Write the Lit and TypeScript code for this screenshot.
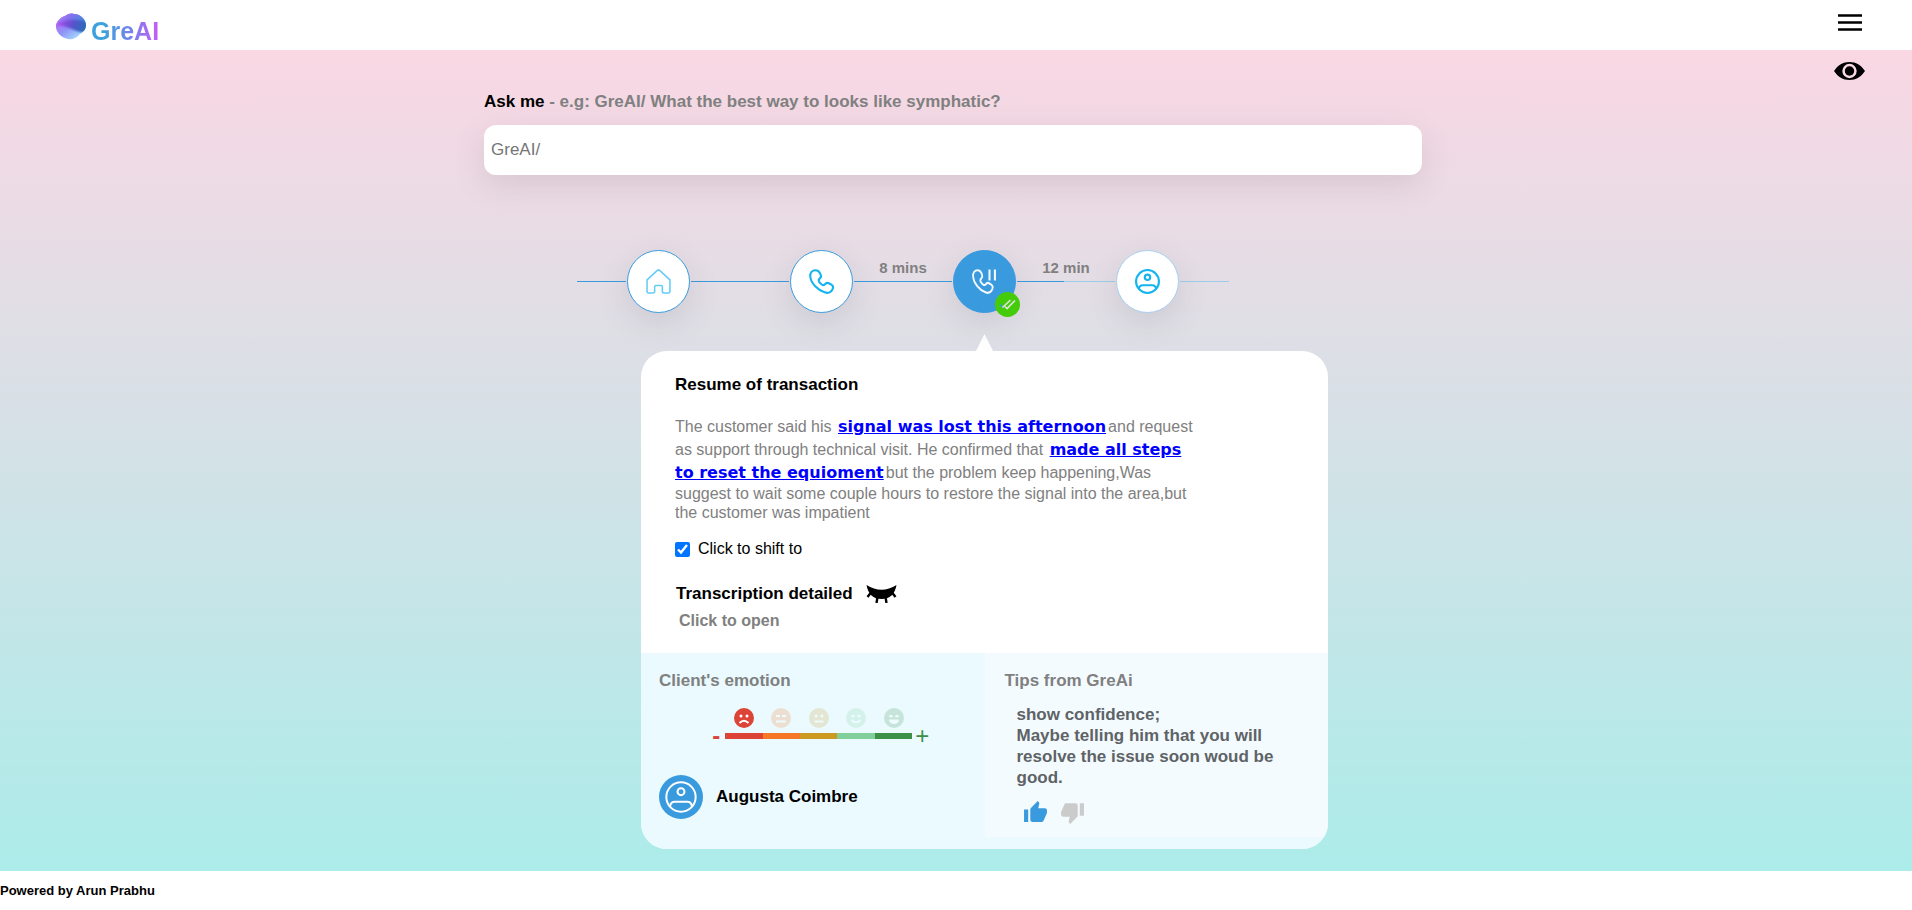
import { LitElement, html, css, svg, nothing } from "lit";
import { customElement, state } from "lit/decorators.js";
import { classMap } from "lit/directives/class-map.js";

const profileGlyph = svg`
  <circle cx="12" cy="12" r="11"></circle>
  <circle cx="12" cy="8" r="2.6"></circle>
  <path d="M3.800 19.200C4 16.800 5.200 15.600 7.400 15.600h9.200c2.200 0 3.400 1.200 3.600 3.600"></path>`;

const handset = svg`<path d="M1.200 7C1 3.400 3 1.200 6.200 1.200c2.200 0 3.200.8 4.200 2.600l.8 1.600c.7 1.500.4 2.600-.8 3.600-1.400 1.100-1.500 1.800-.7 3.200.9 1.500 1.700 2.300 3.100 3 1.200.6 1.900.3 2.900-.8 1-1.100 2.400-1.300 3.800-.5l2 1.200c1.800 1.100 2 2.600 1.200 4.200-1.500 3-4.400 4.200-7.700 3.100C8.200 20.200 1.700 13.600 1.200 7z"></path>`;

const homeGlyph = svg`<path d="M1 10.400 10.900 1.300a1.700 1.700 0 0 1 2.200 0L23 10.400v11.200A1.500 1.500 0 0 1 21.500 23h-4.300a1.500 1.500 0 0 1-1.500-1.500v-4.700a1 1 0 0 0-1-1H9.300a1 1 0 0 0-1 1v4.700A1.500 1.500 0 0 1 6.800 23H2.500A1.500 1.500 0 0 1 1 21.600z"></path>`;

const pausedCall = svg`
  <g transform="scale(.86 1)">${handset}</g>
  <path d="M16.800 .5v10.500M22 .5v10.500"></path>`;

const eyes = [
  svg`<circle cx="7" cy="8" r="1.500"></circle><circle cx="13" cy="8" r="1.500"></circle>`,
  svg`<path d="M5 8h4M11 8h4"></path>`,
  svg`<path d="M5.500 9q1.500-2.600 3 0M11.500 9q1.500-2.600 3 0"></path>`,
];

const moods = [
  { name: "Angry", color: "sad", face: svg`${eyes[0]}<path d="M5.500 15q4.500-4.500 9 0"></path>` },
  { name: "Annoyed", color: "low", face: svg`${eyes[1]}<path d="M5 13.500h10"></path>` },
  { name: "Neutral", color: "mid", face: svg`${eyes[0]}<path d="M5.500 13.500h9"></path>` },
  { name: "Pleased", color: "good", face: svg`${eyes[0]}<path d="M5.500 12q4.500 4.500 9 0"></path>` },
  { name: "Happy", color: "great", face: svg`${eyes[2]}<path class="solid" d="M5 11.500h10c0 2.600-2 4.500-5 4.500s-5-1.900-5-4.500z"></path>` },
];

const thumb =
  "M1 21h4V9H1v12zm22-11c0-1.100-.9-2-2-2h-6.310l.950-4.570.030-.320c0-.410-.170-.790-.440-1.060L14.170 1 7.590 7.590C7.220 7.950 7 8.450 7 9v10c0 1.100.9 2 2 2h9c.830 0 1.540-.5 1.840-1.220l3.020-7.050c.090-.230.140-.470.140-.730v-2z";

@customElement("app-root")
export class AppRoot extends LitElement {
  @state() private mood = 0;
  @state() private step = 2;
  @state() private vote: "up" | "down" = "up";

  static styles = css`
    :host {
      display: flex;
      flex-direction: column;
      min-height: 100vh;
      font-family: "Liberation Sans", Arial, sans-serif;
      font-size: 16px;
      color: #000;
      background: linear-gradient(to top, #a8edea, #fed6e3);
    }
    * { box-sizing: border-box; }
    h2, h3, p, ol, ul { margin: 0; padding: 0; font-size: inherit; list-style: none; }
    button { border: 0; padding: 0; background: none; font: inherit; color: inherit; cursor: pointer; }
    svg { display: block; }

    header {
      display: flex;
      align-items: center;
      justify-content: space-between;
      height: 50px;
      padding: 0 50px 0 55px;
      background: #fff;
    }
    .brand {
      display: flex;
      align-items: center;
      gap: 4px;
      padding-top: 8px;
      text-decoration: none;
      font-weight: bold;
      font-size: 25px;
      line-height: 28px;
    }
    .brand svg { align-self: flex-start; }
    .wordmark {
      padding-top: 4px;
      color: transparent;
      background: linear-gradient(90deg, #3fa0dd 20%, #6f86ea 55%, #c85cf5);
      background-clip: text;
      -webkit-background-clip: text;
    }
    .menu { margin-bottom: 5px; }

    main { flex: 1; padding: 11px 6px 20px 0; }
    .tools { display: flex; justify-content: flex-end; height: 20px; align-items: center; padding-right: 41px; }
    .content { max-width: 938px; margin: 11px auto 0; }

    .ask label {
      display: block;
      margin-bottom: 13px;
      font-size: 17px;
      line-height: 20px;
      font-weight: bold;
    }
    .hint { color: #808080; }
    .ask input {
      display: block;
      width: 100%;
      height: 50px;
      padding: 0 7px;
      border: 0;
      border-radius: 12px;
      outline: 0;
      background: #fff;
      font: inherit;
      font-size: 17px;
      box-shadow: 0 10px 30px rgba(100, 100, 111, 0.16);
    }
    .ask input::placeholder { color: #757575; }

    .steps { display: flex; max-width: 652px; margin: 75px 0 0 93px; }
    .span {
      flex: 2;
      display: grid;
      grid-template-rows: 31px 1px 31px;
      margin: 0 1px;
      text-align: center;
      font-size: 15px;
      line-height: 18px;
      font-weight: bold;
      color: #808080;
    }
    .span.edge { flex: 1; }
    .span.first { margin-left: 0; }
    .span.last { margin-right: 0; }
    .time { padding-top: 9px; }
    .line { grid-row: 2; background: #3a9ade; }
    .partial .line { background: linear-gradient(90deg, #3a9ade 48%, #9ccbe8 48%); }
    .last .line { background: #9ccbe8; }
    .stop {
      position: relative;
      flex: none;
      display: grid;
      place-items: center;
      width: 63px;
      height: 63px;
      border: 1px solid #3a9ade;
      border-radius: 50%;
      background: #fff;
      box-shadow: 0 10px 30px rgba(100, 100, 111, 0.16);
    }
    .stop svg, .avatar svg { fill: none; stroke: #14b4f0; stroke-width: 2; overflow: visible; }
    .stop .thin { stroke: #62cdf7; stroke-width: 1.500; }
    .stop.pending { border-color: #a6cff0; }
    .stop.current { background: #3a9ade; }
    .stop.current svg { stroke: #f2f8fd; }
    .stop .badge {
      position: absolute;
      right: -5px;
      bottom: -5px;
      display: grid;
      place-items: center;
      width: 25px;
      height: 25px;
      border-radius: 50%;
      background: #44cc0a;
    }
    .stop .badge svg { stroke-width: 1.600; }

    .panel { max-width: 687px; margin: 21px 0 0 157px; }
    .pointer { display: block; margin: 0 auto; }
    .card { border-radius: 26px; background: #fff; overflow: hidden; }
    .summary { padding: 24px 34px 22px; }
    .summary h2, .client-name { font-size: 17px; line-height: 20px; }
    .summary p { max-width: 526px; margin-top: 20px; line-height: 19px; color: #808080; }
    .summary p a {
      margin: 0 2px;
      font-family: "DejaVu Sans", Verdana, sans-serif;
      font-weight: bold;
      line-height: 23px;
      color: #00f;
    }
    .shift { display: flex; align-items: center; gap: 8px; margin-top: 18px; line-height: 18px; }
    .shift input { width: 15px; height: 15px; margin: 0; accent-color: #0075ff; }
    .transcript { display: flex; align-items: center; gap: 13px; margin-top: 26px; padding-left: 1px; }
    .lashes { stroke: #000; stroke-width: 2.400; fill: none; }
    .open { display: block; margin-top: 7px; padding-left: 4px; font-weight: bold; line-height: 20px; color: #808080; }

    .insights { display: grid; grid-template-columns: 1fr 1fr; padding-bottom: 12px; background: #eafaff; }
    .insights h3 { font-size: 17px; line-height: 20px; color: #808080; }
    .emotion { padding: 18px 18px 0; }
    .scale { display: flex; align-items: flex-end; justify-content: center; gap: 3px; margin: 17px 0 0 12px; }
    .sign { width: 12px; height: 20px; margin-bottom: -7px; font-size: 24px; line-height: 20px; text-align: center; }
    .minus { color: #db4437; font-weight: bold; }
    .plus { color: #3c9048; }
    .moods { display: flex; width: 187px; }
    .mood { flex: 1; display: grid; justify-items: center; gap: 5px; }
    .mood::after { content: ""; width: 100%; height: 6px; background: var(--tone); }
    .mood svg { fill: #fff; stroke: #fff; stroke-width: 0; }
    .mood path { fill: none; stroke-width: 2; }
    .mood .solid { fill: #fff; stroke-width: 0; }
    .mood .disc { fill: var(--tone); }
    .mood button { opacity: 0.2; }
    .mood button.active { opacity: 1; }
    .sad { --tone: #db4437; }
    .low { --tone: #f47826; }
    .mid { --tone: #cc9922; }
    .good { --tone: #82cf9c; }
    .great { --tone: #3c9048; }
    .client { display: flex; align-items: center; gap: 13px; margin-top: 36px; }
    .avatar { display: grid; place-items: center; width: 44px; height: 44px; border-radius: 50%; background: #3a9ade; }
    .avatar svg { stroke: #fff; stroke-width: 1.500; }
    .client-name { font-weight: bold; }

    .tips { padding: 18px 20px 12px; background: #f4fbff; }
    .advice { margin: 13px 0 0 12px; max-width: 280px; font-size: 17px; line-height: 21px; font-weight: bold; color: #5e6366; }
    .votes { display: flex; gap: 12px; margin: 12px 0 0 18px; }
    .votes svg { fill: #cbcbcb; }
    .votes .on svg { fill: #3a9ade; }

    footer { padding: 12px 0; background: #fff; font-size: 13px; line-height: 15px; font-weight: bold; }
  `;

  private stop(index: number, label: string, glyph: unknown, extra = "", thin = false) {
    return html`<button
      class=${classMap({ stop: true, current: this.step === index, pending: extra === "pending" })}
      aria-label=${label}
      @click=${() => (this.step = index)}
    >
      <svg class=${thin ? "thin" : ""} width="25" height="25" viewBox="0 0 24 24">${glyph}</svg>
      ${extra === "done"
        ? html`<span class="badge"><svg width="17" height="13" viewBox="0 0 17 13">
            <path d="M1 6.500 4 9.500" stroke="#3a9ade"></path>
            <path d="M3.500 9.500 11.500 2M6 8.500 8 10.500 16 2.500" stroke="#dfe3df"></path>
          </svg></span>`
        : nothing}
    </button>`;
  }

  render() {
    return html`
      <header>
        <a class="brand" href="#">
          <svg width="32" height="28" viewBox="0 0 32 28" aria-hidden="true">
            <defs>
              <linearGradient id="base" x1="0" y1="0.200" x2="0.700" y2="1">
                <stop offset="0" stop-color="#c65cf8"></stop>
                <stop offset="0.500" stop-color="#8f93f8"></stop>
                <stop offset="1" stop-color="#a8e6fd"></stop>
              </linearGradient>
              <linearGradient id="wave" x1="0" y1="0.400" x2="1" y2="0.600">
                <stop offset="0" stop-color="#b84df0"></stop>
                <stop offset="0.500" stop-color="#5a52cc"></stop>
                <stop offset="1" stop-color="#2170b4"></stop>
              </linearGradient>
              <linearGradient id="crown" x1="0" y1="0" x2="1" y2="0.500">
                <stop offset="0" stop-color="#d58cf8"></stop>
                <stop offset="0.500" stop-color="#8570f0"></stop>
                <stop offset="1" stop-color="#3590d8"></stop>
              </linearGradient>
              <filter id="soft"><feGaussianBlur stdDeviation="1"></feGaussianBlur></filter>
              <clipPath id="blob"><path d="M1 12C2 8 6 4 10 3c3-2 5-3 9-2 7 0 12 6 12 11 0 5-3 7-6 9-3 4-8 6-12 5C6 25 0 18 1 12z"></path></clipPath>
            </defs>
            <g clip-path="url(#blob)">
              <path fill="url(#base)" d="M0 0h32v28H0z"></path>
              <g filter="url(#soft)">
                <path fill="url(#crown)" d="M0 10V-3h34v18C24 11 14 7 0 10z"></path>
                <path fill="url(#wave)" d="M0 12C8 7 18 5 33 9v10c-10 3-16-6-33-7z"></path>
              </g>
            </g>
          </svg>
          <span class="wordmark">GreAI</span>
        </a>
        <button class="menu" aria-label="Menu">
          <svg width="24" height="17" viewBox="0 0 24 17"><path d="M0 1.500h24M0 8.500h24M0 15.500h24" stroke="#000" stroke-width="2.500"></path></svg>
        </button>
      </header>

      <main>
        <div class="tools">
          <button aria-label="Toggle view">
            <svg width="31" height="18" viewBox="0 0 31 18">
              <path fill-rule="evenodd" d="M0 9C4 3 9 0 15.500 0S27 3 31 9c-4 6-9 9-15.500 9S4 15 0 9zM15.500 1.800a7.200 7.200 0 1 0 0 14.400 7.200 7.200 0 0 0 0-14.400z"></path>
              <circle cx="15.500" cy="9" r="4.700"></circle>
            </svg>
          </button>
        </div>

        <div class="content">
          <form class="ask" @submit=${(e: Event) => e.preventDefault()}>
            <label for="ask">Ask me <span class="hint">- e.g: GreAI/ What the best way to looks like symphatic?</span></label>
            <input id="ask" type="text" placeholder="GreAI/" />
          </form>

          <div class="steps">
            <div class="span edge first"><span class="line"></span></div>
            ${this.stop(0, "Home", homeGlyph, "", true)}
            <div class="span"><span class="line"></span></div>
            ${this.stop(1, "Call", handset)}
            <div class="span"><span class="time">8 mins</span><span class="line"></span></div>
            ${this.stop(2, "Call on hold", pausedCall, "done")}
            <div class="span partial"><span class="time">12 min</span><span class="line"></span></div>
            ${this.stop(3, "Agent", profileGlyph, "pending")}
            <div class="span edge last"><span class="line"></span></div>
          </div>

          <div class="panel">
            <svg class="pointer" width="17" height="17" viewBox="0 0 17 17"><path fill="#fff" d="M8.500 0 17 17H0z"></path></svg>
            <article class="card">
              <section class="summary">
                <h2>Resume of transaction</h2>
                <p>The customer said his <a href="#signal">signal was lost this afternoon</a>and request as support
                  through technical visit. He confirmed that <a href="#steps">made all steps to reset the equioment</a>but
                  the problem keep happening,Was suggest to wait some couple hours to restore the signal into the
                  area,but the customer was impatient</p>
                <label class="shift"><input type="checkbox" checked />Click to shift to</label>
                <div class="transcript">
                  <h2>Transcription detailed</h2>
                  <button aria-label="Show transcription">
                    <svg width="31" height="18" viewBox="0 0 31 18">
                      <path d="M.5 0Q15.500 9.500 30.500 0 28 14 15.500 14T.5 0z"></path>
                      <path class="lashes" d="M5 7.500 1.500 12M11.500 12l-1 6M19.500 12l1 6M26 7.500l3.500 4.500"></path>
                    </svg>
                  </button>
                </div>
                <button class="open">Click to open</button>
              </section>

              <div class="insights">
                <section class="emotion">
                  <h3>Client's emotion</h3>
                  <div class="scale">
                    <span class="sign minus">-</span>
                    <ul class="moods">
                      ${moods.map(
                        (m, i) => html`<li class="mood ${m.color}">
                          <button class=${classMap({ active: this.mood === i })} aria-label=${m.name} @click=${() => (this.mood = i)}>
                            <svg width="20" height="20" viewBox="0 0 20 20"><circle class="disc" cx="10" cy="10" r="10"></circle>${m.face}</svg>
                          </button>
                        </li>`
                      )}
                    </ul>
                    <span class="sign plus">+</span>
                  </div>
                  <div class="client">
                    <span class="avatar"><svg width="32" height="32" viewBox="0 0 24 24">${profileGlyph}</svg></span>
                    <span class="client-name">Augusta Coimbre</span>
                  </div>
                </section>
                <section class="tips">
                  <h3>Tips from GreAi</h3>
                  <p class="advice">show confidence;<br />Maybe telling him that you will resolve the issue soon woud be good.</p>
                  <div class="votes">
                    <button class=${classMap({ on: this.vote === "up" })} aria-label="Helpful" @click=${() => (this.vote = "up")}>
                      <svg width="25" height="25" viewBox="0 0 24 24"><path d=${thumb}></path></svg>
                    </button>
                    <button class=${classMap({ on: this.vote === "down" })} aria-label="Not helpful" @click=${() => (this.vote = "down")}>
                      <svg width="25" height="25" viewBox="0 0 24 24"><path transform="rotate(180 12 12)" d=${thumb}></path></svg>
                    </button>
                  </div>
                </section>
              </div>
            </article>
          </div>
        </div>
      </main>

      <footer>Powered by Arun Prabhu</footer>
    `;
  }
}
